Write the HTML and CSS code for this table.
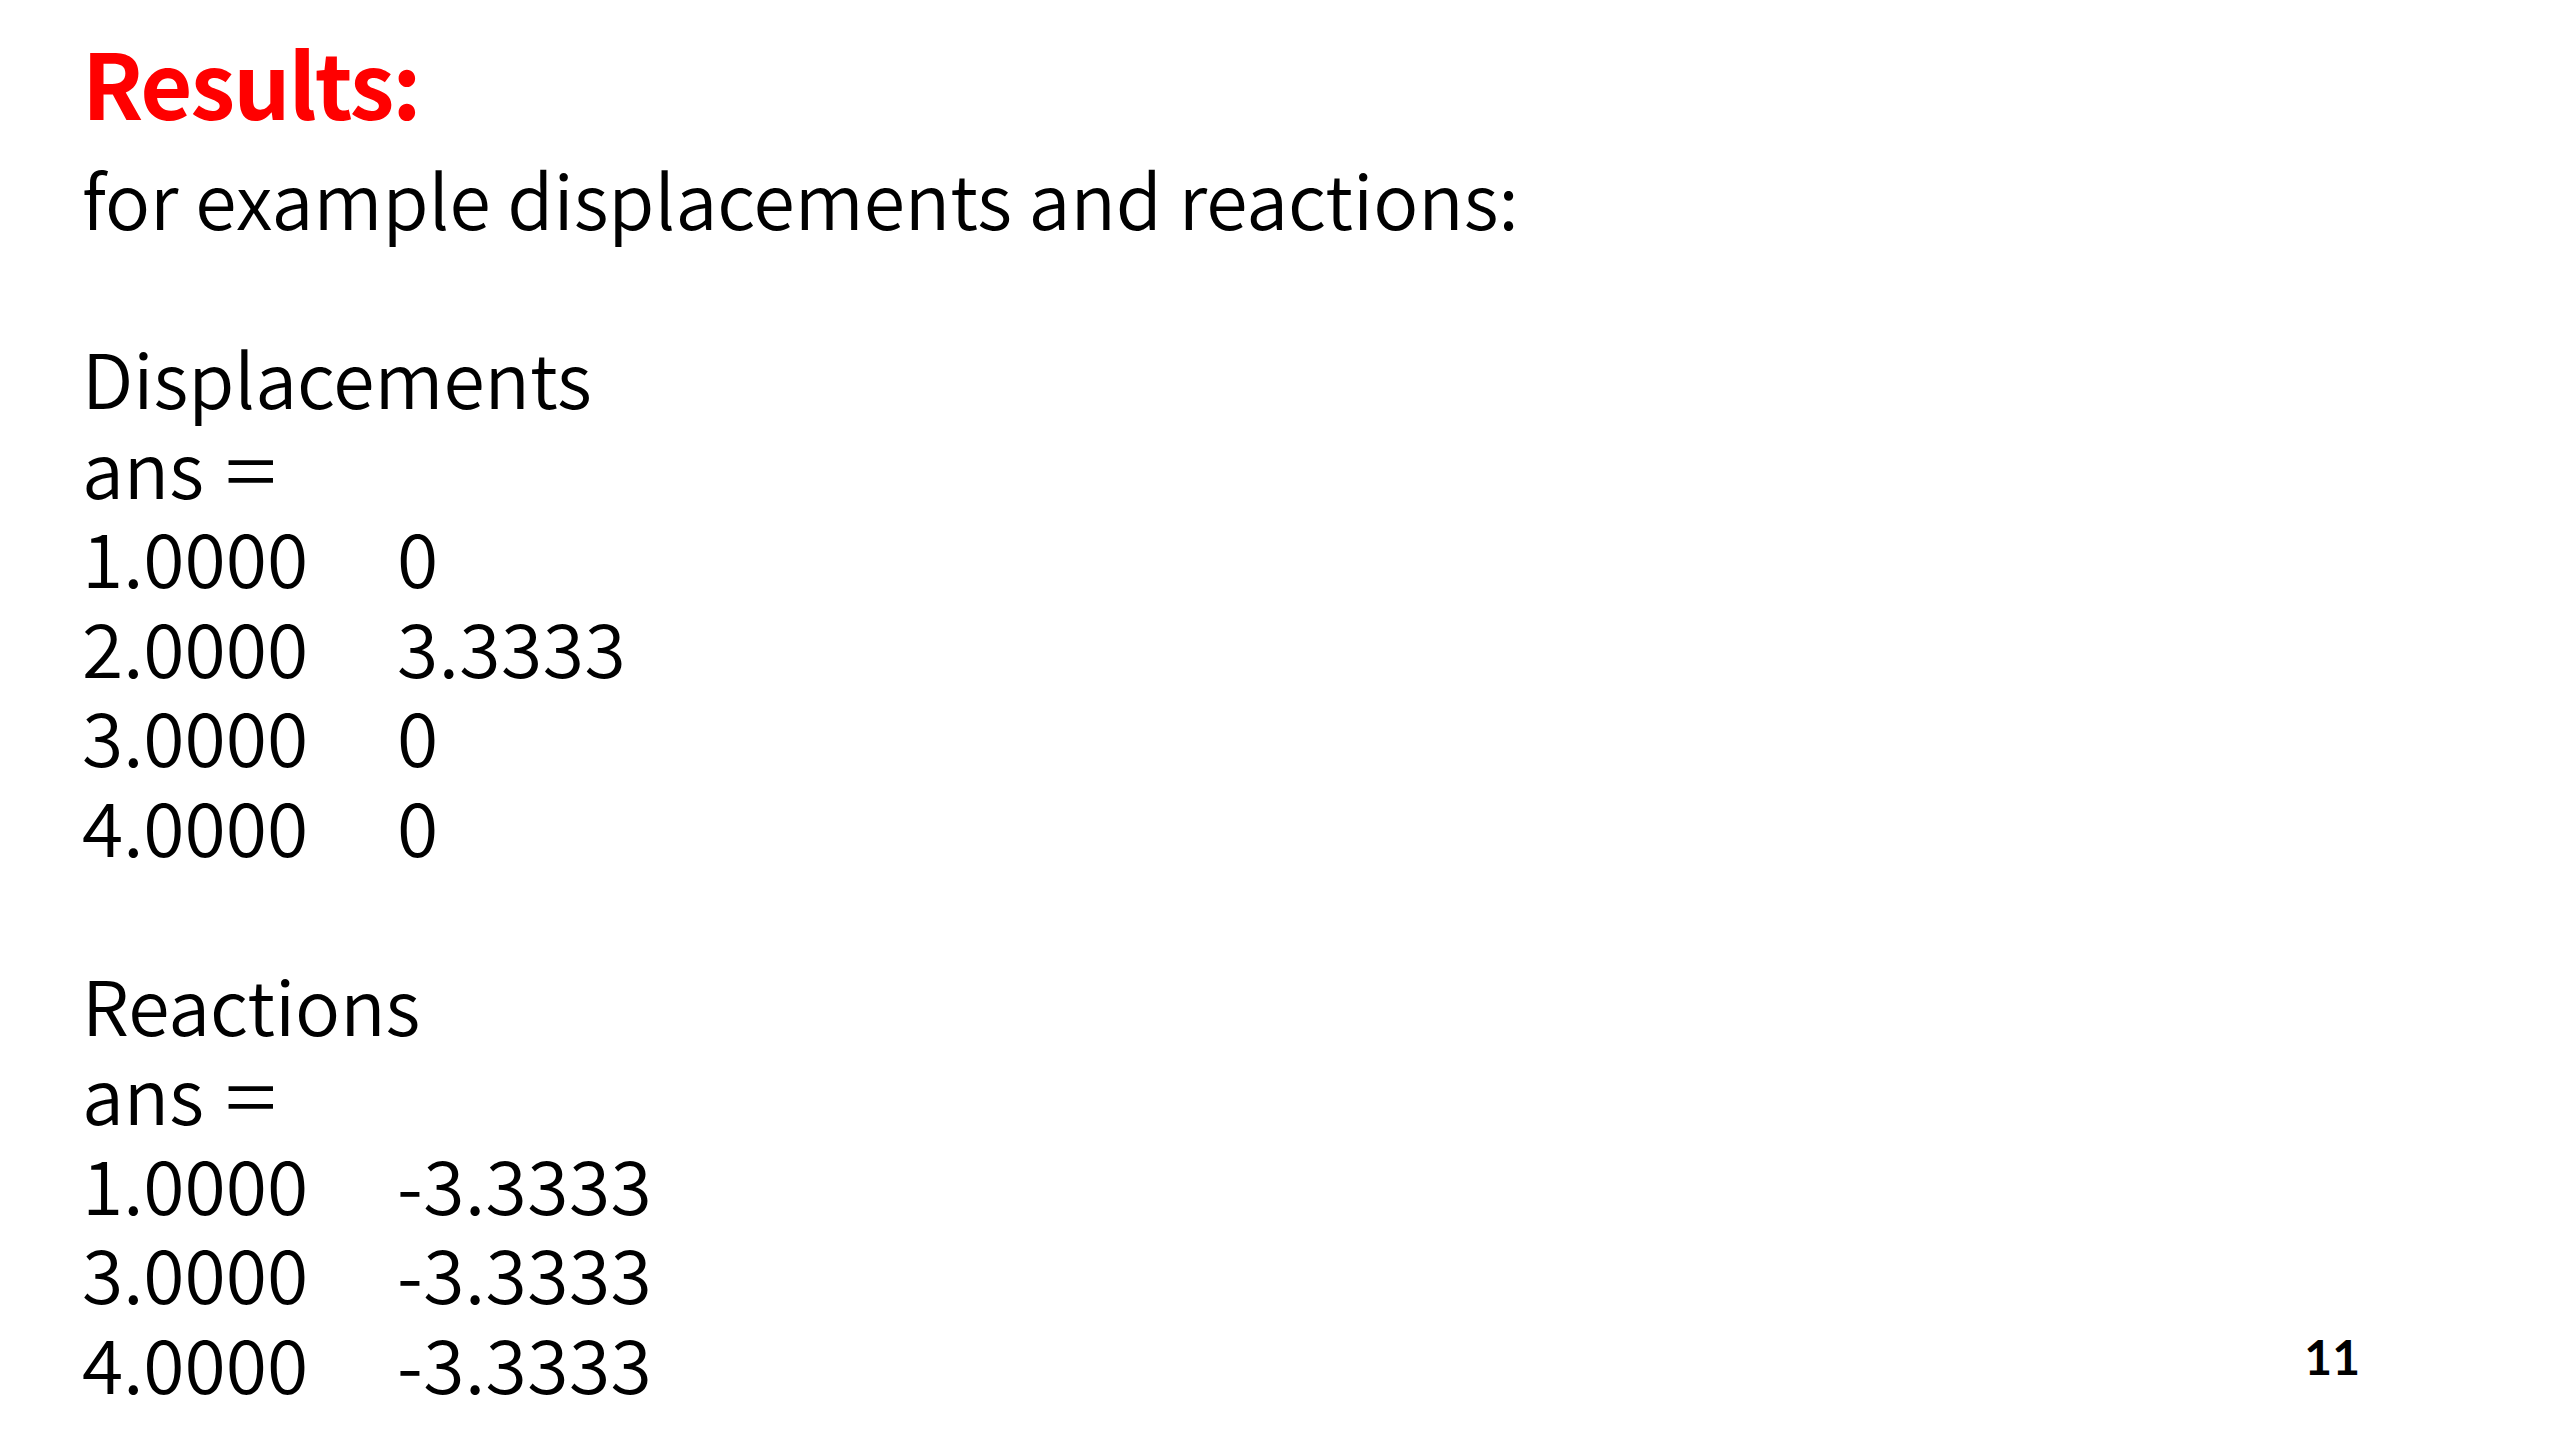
FILE: index.html
```html
<!DOCTYPE html>
<html lang="en">
<head>
<meta charset="utf-8">
<title>Results</title>
<link rel="stylesheet" href="styles.css">
</head>
<body>
<div class="slide">
  <div class="content">
    <h1 class="title">Results:</h1>
    <div class="body">
      <p class="line">for example displacements and reactions:</p>
      <p class="line blank"></p>
      <p class="line">Displacements</p>
      <p class="line">ans <span class="eq">=</span></p>
      <div class="row"><span>1.0000</span><span>0</span></div>
      <div class="row"><span>2.0000</span><span>3.3333</span></div>
      <div class="row"><span>3.0000</span><span>0</span></div>
      <div class="row"><span>4.0000</span><span>0</span></div>
      <p class="line blank"></p>
      <p class="line">Reactions</p>
      <p class="line">ans <span class="eq">=</span></p>
      <div class="row"><span>1.0000</span><span>-3.3333</span></div>
      <div class="row"><span>3.0000</span><span>-3.3333</span></div>
      <div class="row"><span>4.0000</span><span>-3.3333</span></div>
    </div>
  </div>
  <div class="page-num">11</div>
</div>
</body>
</html>
```
FILE: styles.css
```css
html, body {
  margin: 0;
  padding: 0;
  background: #ffffff;
}

.slide {
  width: 2560px;
  height: 1440px;
  box-sizing: border-box;
  display: flex;
  flex-direction: row;
  padding: 31px 198px 53px 82px;
  overflow: hidden;
}

.content {
  flex: 1;
  display: flex;
  flex-direction: column;
}

.title {
  margin: 0 0 22px 0;
  font-family: "Noto Sans CJK JP", "Noto Sans", sans-serif;
  font-weight: 700;
  font-size: 90px;
  line-height: 100px;
  color: #ff0000;
  letter-spacing: -2px;
}

.body {
  font-family: "Noto Sans CJK JP", "Noto Sans", sans-serif;
  font-weight: 350;
  font-size: 75px;
  line-height: 89.5px;
  color: #000000;
  letter-spacing: 0;
}

.line {
  margin: 0;
  height: 89.5px;
  white-space: pre;
}

.eq {
  display: inline-block;
  margin-left: 4px;
  transform: scaleX(1.25);
  transform-origin: left center;
}

.row {
  display: grid;
  grid-template-columns: 315px auto;
  height: 89.5px;
}

.row span:last-child {
  letter-spacing: 0.5px;
}

.page-num {
  align-self: flex-end;
  font-family: Lato, "Liberation Sans", sans-serif;
  font-weight: 700;
  font-size: 48px;
  line-height: 60px;
  color: #000000;
  margin-right: 2px;
}
```
